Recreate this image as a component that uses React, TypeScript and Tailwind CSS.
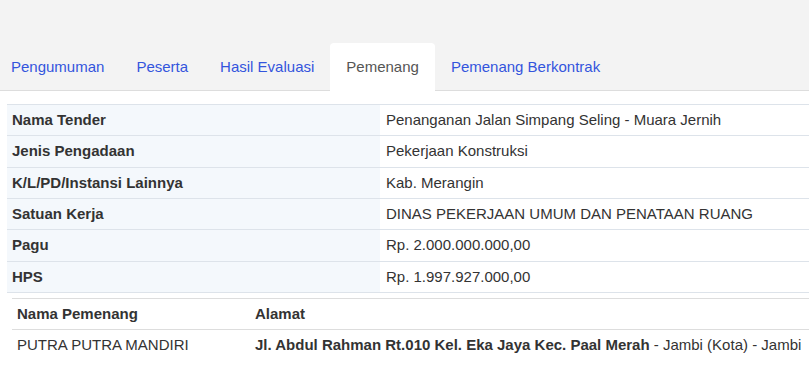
import React from 'react';

const TABS = ['Pengumuman', 'Peserta', 'Hasil Evaluasi', 'Pemenang', 'Pemenang Berkontrak'];
const ACTIVE = 'Pemenang';

const ROWS = [
  ['Nama Tender', 'Penanganan Jalan Simpang Seling - Muara Jernih'],
  ['Jenis Pengadaan', 'Pekerjaan Konstruksi'],
  ['K/L/PD/Instansi Lainnya', 'Kab. Merangin'],
  ['Satuan Kerja', 'DINAS PEKERJAAN UMUM DAN PENATAAN RUANG'],
  ['Pagu', 'Rp. 2.000.000.000,00'],
  ['HPS', 'Rp. 1.997.927.000,00'],
];

const App: React.FC = () => {
  return (
    <div className="min-h-screen w-[809px] overflow-hidden bg-white text-[15px] text-[#333] font-['Liberation_Sans',Arial,sans-serif]">
      {/* Tabs */}
      <div className="h-[91px] bg-[#f3f3f3] border-b border-[#dddddd] pt-[43px]">
        <ul className="flex ml-[-5px] h-[48px]">
          {TABS.map((t) => (
            <li
              key={t}
              className={`px-4 flex items-center rounded-t-[4px] whitespace-nowrap ${
                t === ACTIVE ? 'bg-white text-[#555]' : 'text-[#3355dd]'
              }`}
            >
              {t}
            </li>
          ))}
        </ul>
      </div>

      {/* Detail table */}
      <div className="pl-[7px] pt-[13px]">
        <table className="w-[830px] border-collapse leading-[20.33px]">
          <tbody>
            {ROWS.map(([k, v]) => (
              <tr key={k} className="border-t border-[#dde3ea]">
                <td className="w-[373px] bg-[#f4f8fc] px-[5px] py-[5px] font-bold">{k}</td>
                <td className="px-[6px] py-[5px]">{v}</td>
              </tr>
            ))}
            <tr className="border-t border-[#dde3ea]">
              <td colSpan={2} className="pt-[5px] pl-[5px]">
                <table className="w-[830px] border-collapse leading-[20.33px]">
                  <thead>
                    <tr className="border-t border-[#dddddd]">
                      <th className="w-[238px] text-left font-bold px-[5px] py-[5px]">Nama Pemenang</th>
                      <th className="text-left font-bold px-[5px] py-[5px]">Alamat</th>
                    </tr>
                  </thead>
                  <tbody>
                    <tr className="border-t border-[#dddddd]">
                      <td className="px-[5px] py-[5px] whitespace-nowrap">PUTRA PUTRA MANDIRI</td>
                      <td className="px-[5px] py-[5px] whitespace-nowrap">
                        <b>Jl. Abdul Rahman Rt.010 Kel. Eka Jaya Kec. Paal Merah</b> - Jambi (Kota) - Jambi
                      </td>
                    </tr>
                  </tbody>
                </table>
              </td>
            </tr>
          </tbody>
        </table>
      </div>
    </div>
  );
};

export default App;
